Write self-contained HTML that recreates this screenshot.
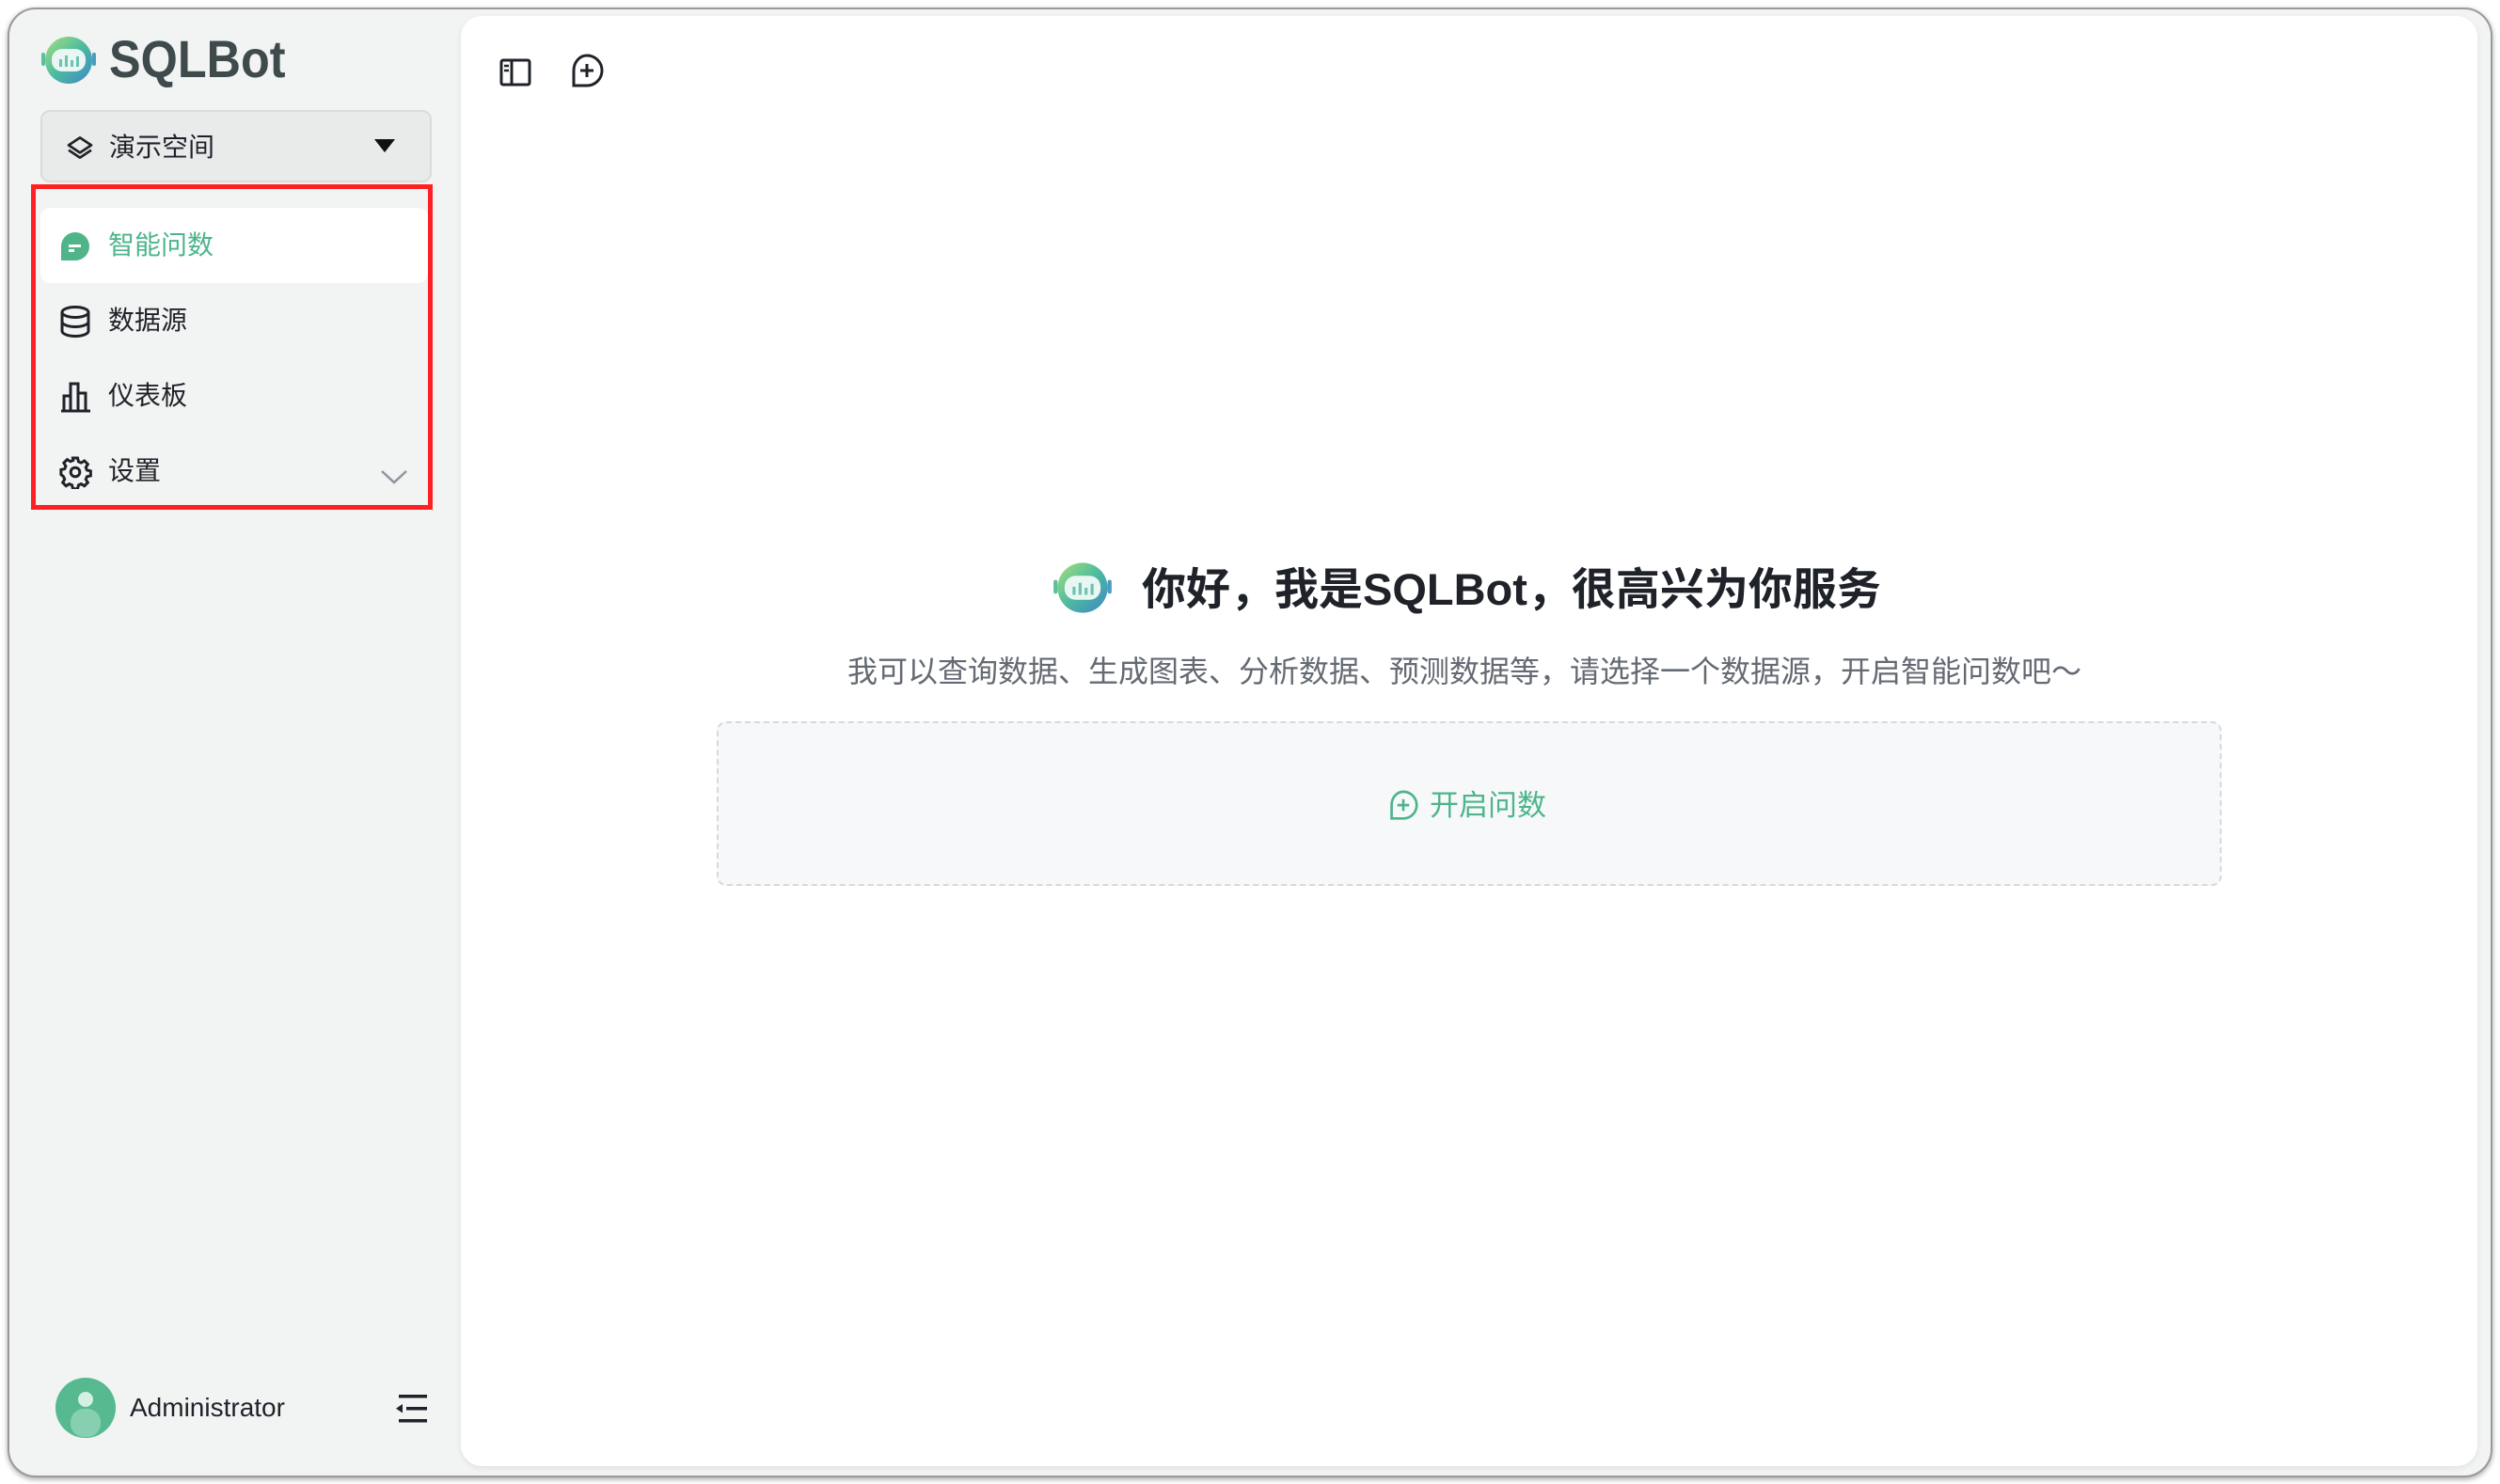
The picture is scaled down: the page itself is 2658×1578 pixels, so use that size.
<!DOCTYPE html>
<html><head><meta charset="utf-8"><style>
*{box-sizing:border-box;margin:0;padding:0}
body{width:2658px;height:1578px;background:#fff;position:relative;overflow:hidden;font-family:"Liberation Sans","Noto Sans CJK SC",sans-serif}
.win{position:absolute;left:8px;top:8px;width:2642px;height:1563px;background:#f2f3f3;border-radius:30px;border:2px solid #9a9a9a;box-shadow:0 2px 6px rgba(0,0,0,.35);overflow:hidden}
.main{position:absolute;left:480px;top:7px;width:2144px;height:1542px;background:#fff;border-radius:22px;box-shadow:0 2px 6px rgba(0,0,0,.08)}
.abs{position:absolute}
.t{font-family:"Liberation Sans","Noto Sans CJK SC",sans-serif;white-space:nowrap}
</style></head><body>
<div class="win">
 <svg class="abs" style="left:32px;top:26px" width="62" height="56" viewBox="0 0 62 56">
  <defs><linearGradient id="g" x1="0" y1="0" x2="1" y2="1"><stop offset="0" stop-color="#a6e07d"/><stop offset=".5" stop-color="#4dbb9e"/><stop offset="1" stop-color="#3f86c6"/></linearGradient></defs>
  <rect x="2" y="20" width="4" height="14" rx="2" fill="#5cbfa0"/><rect x="56" y="20" width="4" height="14" rx="2" fill="#4a9dc0"/>
  <ellipse cx="31" cy="28" rx="25" ry="25" fill="url(#g)"/>
  <rect x="13" y="16" width="36" height="24" rx="11" fill="#e9f6f4"/>
  <rect x="21" y="27" width="3" height="8" fill="#6cc3ae"/><rect x="27" y="23" width="3" height="12" fill="#6cc3ae"/><rect x="33" y="28" width="3" height="7" fill="#6cc3ae"/><rect x="39" y="24" width="3" height="11" fill="#6cc3ae"/>
 </svg>
 <div class="abs t" style="left:106px;top:18px;font-size:56px;font-weight:bold;color:#3f4a4d;line-height:70px;transform:scaleX(0.9);transform-origin:left">SQLBot</div>
 <div class="abs" style="left:33px;top:107px;width:416px;height:77px;background:#e9ebeb;border:2px solid #d9dcdc;border-radius:10px"></div>
 <svg class="abs" style="left:59px;top:131px" width="32" height="32" viewBox="0 0 24 24" fill="none" stroke="#1f2329" stroke-width="2" stroke-linejoin="round"><path d="M12 4 L21 10 L12 16 L3 10 Z"/><path d="M3 14 L12 20 L21 14"/></svg>
 <div class="abs t" style="left:106px;top:127px;font-size:28px;line-height:40px;color:#1f2329">演示空间</div>
 <svg class="abs" style="left:388px;top:138px" width="22" height="16"><path d="M0 0 H22 L11 14 Z" fill="#111"/></svg>
 <div class="abs" style="left:23px;top:186px;width:427px;height:346px;border:5px solid #ff2121"></div>
 <div class="abs" style="left:33px;top:211px;width:412px;height:80px;background:#fff;border-radius:10px"></div>
 <svg class="abs" style="left:53px;top:235px" width="34" height="34" viewBox="0 0 34 34"><path d="M17 2 A15 15 0 1 1 17 32 H2 V17 A15 15 0 0 1 17 2Z" fill="#4fb588"/><rect x="10" y="15" width="13" height="3" fill="#fff"/><rect x="10" y="20" width="6" height="3" fill="#fff"/></svg>
 <div class="abs t" style="left:105px;top:231px;font-size:28px;line-height:40px;color:#4cb58a">智能问数</div>
 <svg class="abs" style="left:53px;top:314px" width="34" height="36" viewBox="0 0 34 36" fill="none" stroke="#1f2329" stroke-width="3"><ellipse cx="17" cy="8" rx="14" ry="5.5"/><path d="M3 8 V28 A14 5.5 0 0 0 31 28 V8"/><path d="M3 18 A14 5.5 0 0 0 31 18"/></svg>
 <div class="abs t" style="left:105px;top:311px;font-size:28px;line-height:40px;color:#1f2329">数据源</div>
 <svg class="abs" style="left:53px;top:395px" width="34" height="34" viewBox="0 0 34 34" fill="none" stroke="#1f2329" stroke-width="3"><path d="M2 32 H33"/><path d="M5 32 V16 H12 V32"/><path d="M12 32 V3 H20 V32"/><path d="M20 32 V13 H28 V32"/></svg>
 <div class="abs t" style="left:105px;top:391px;font-size:28px;line-height:40px;color:#1f2329">仪表板</div>
 <svg class="abs" style="left:52px;top:474px" width="36" height="36" viewBox="0 0 24 24" fill="none" stroke="#1f2329" stroke-width="2"><circle cx="12" cy="12" r="3.2"/><path d="M10.3 2h3.4l.6 2.6 1.9.8 2.3-1.4 2.4 2.4-1.4 2.3.8 1.9 2.6.6v3.4l-2.6.6-.8 1.9 1.4 2.3-2.4 2.4-2.3-1.4-1.9.8-.6 2.6h-3.4l-.6-2.6-1.9-.8-2.3 1.4-2.4-2.4 1.4-2.3-.8-1.9L1.9 13.7v-3.4l2.6-.6.8-1.9-1.4-2.3 2.4-2.4 2.3 1.4 1.9-.8z"/></svg>
 <div class="abs t" style="left:105px;top:471px;font-size:28px;line-height:40px;color:#1f2329">设置</div>
 <svg class="abs" style="left:394px;top:488px" width="30" height="18"><path d="M2 3 L15 15 L28 3" fill="none" stroke="#8f959e" stroke-width="2.5"/></svg>
 <svg class="abs" style="left:48px;top:1454px" width="66" height="66" viewBox="0 0 66 66"><defs><clipPath id="c"><circle cx="33" cy="33" r="32"/></clipPath></defs><circle cx="33" cy="33" r="32" fill="#56b98f"/><g clip-path="url(#c)"><circle cx="33" cy="24" r="8" fill="#d6efe4"/><rect x="17" y="34" width="32" height="30" rx="14" fill="#86cfb0"/></g></svg>
 <div class="abs t" style="left:128px;top:1470px;font-size:28px;line-height:34px;color:#1f2329">Administrator</div>
 <svg class="abs" style="left:411px;top:1473px" width="34" height="30" viewBox="0 0 34 30"><rect x="3" y="0" width="30" height="3.5" fill="#1f2329"/><rect x="11" y="13" width="22" height="3.5" fill="#1f2329"/><rect x="3" y="26" width="30" height="3.5" fill="#1f2329"/><path d="M0 14.7 L7 10 V19.5Z" fill="#1f2329"/></svg>
 <div class="main">
  <svg class="abs" style="left:41px;top:45px" width="34" height="30" viewBox="0 0 34 30" fill="none" stroke="#1f2329" stroke-width="3"><rect x="2" y="2" width="30" height="26" rx="2"/><path d="M13 2 V28"/><path d="M5 8 H10 M5 13 H10" stroke-width="2.5"/></svg>
  <svg class="abs" style="left:116px;top:40px" width="36" height="38" viewBox="0 0 36 38" fill="none" stroke="#1f2329" stroke-width="3"><path d="M18 2 A16 16 0 1 1 18 34 H4 V18 A14 16 0 0 1 18 2Z"/><path d="M18 11 V25 M11 18 H25"/></svg>
  <svg class="abs" style="left:628px;top:575px" width="66" height="66" viewBox="0 0 62 56">
   <defs><linearGradient id="g2" x1="0" y1="0" x2="1" y2="1"><stop offset="0" stop-color="#a6e07d"/><stop offset=".5" stop-color="#4dbb9e"/><stop offset="1" stop-color="#3f86c6"/></linearGradient></defs>
   <rect x="2" y="20" width="4" height="14" rx="2" fill="#5cbfa0"/><rect x="56" y="20" width="4" height="14" rx="2" fill="#4a9dc0"/>
   <ellipse cx="31" cy="28" rx="25" ry="25" fill="url(#g2)"/>
   <rect x="13" y="16" width="36" height="24" rx="11" fill="#e9f6f4"/>
   <rect x="21" y="27" width="3" height="8" fill="#6cc3ae"/><rect x="27" y="23" width="3" height="12" fill="#6cc3ae"/><rect x="33" y="28" width="3" height="7" fill="#6cc3ae"/><rect x="39" y="24" width="3" height="11" fill="#6cc3ae"/>
  </svg>
  <div class="abs t" style="left:724px;top:578px;font-size:47px;line-height:64px;font-weight:bold;color:#1f2329">你好，我是SQLBot，很高兴为你服务</div>
  <div class="abs t" style="left:0;width:2134px;text-align:center;top:677px;font-size:32px;line-height:40px;color:#646a73">我可以查询数据、生成图表、分析数据、预测数据等，请选择一个数据源，开启智能问数吧～</div>
  <div class="abs" style="left:272px;top:750px;width:1600px;height:175px;background:#f7f8fa;border:2px dashed #d6d9dc;border-radius:10px"></div>
  <svg class="abs" style="left:986px;top:823px" width="32" height="34" viewBox="0 0 36 38" fill="none" stroke="#4cb58a" stroke-width="3"><path d="M18 2 A16 16 0 1 1 18 34 H4 V18 A14 16 0 0 1 18 2Z"/><path d="M18 11 V25 M11 18 H25"/></svg>
  <div class="abs t" style="left:1030px;top:820px;font-size:31px;line-height:40px;color:#4cb58a">开启问数</div>
 </div>
</div>
</body></html>
